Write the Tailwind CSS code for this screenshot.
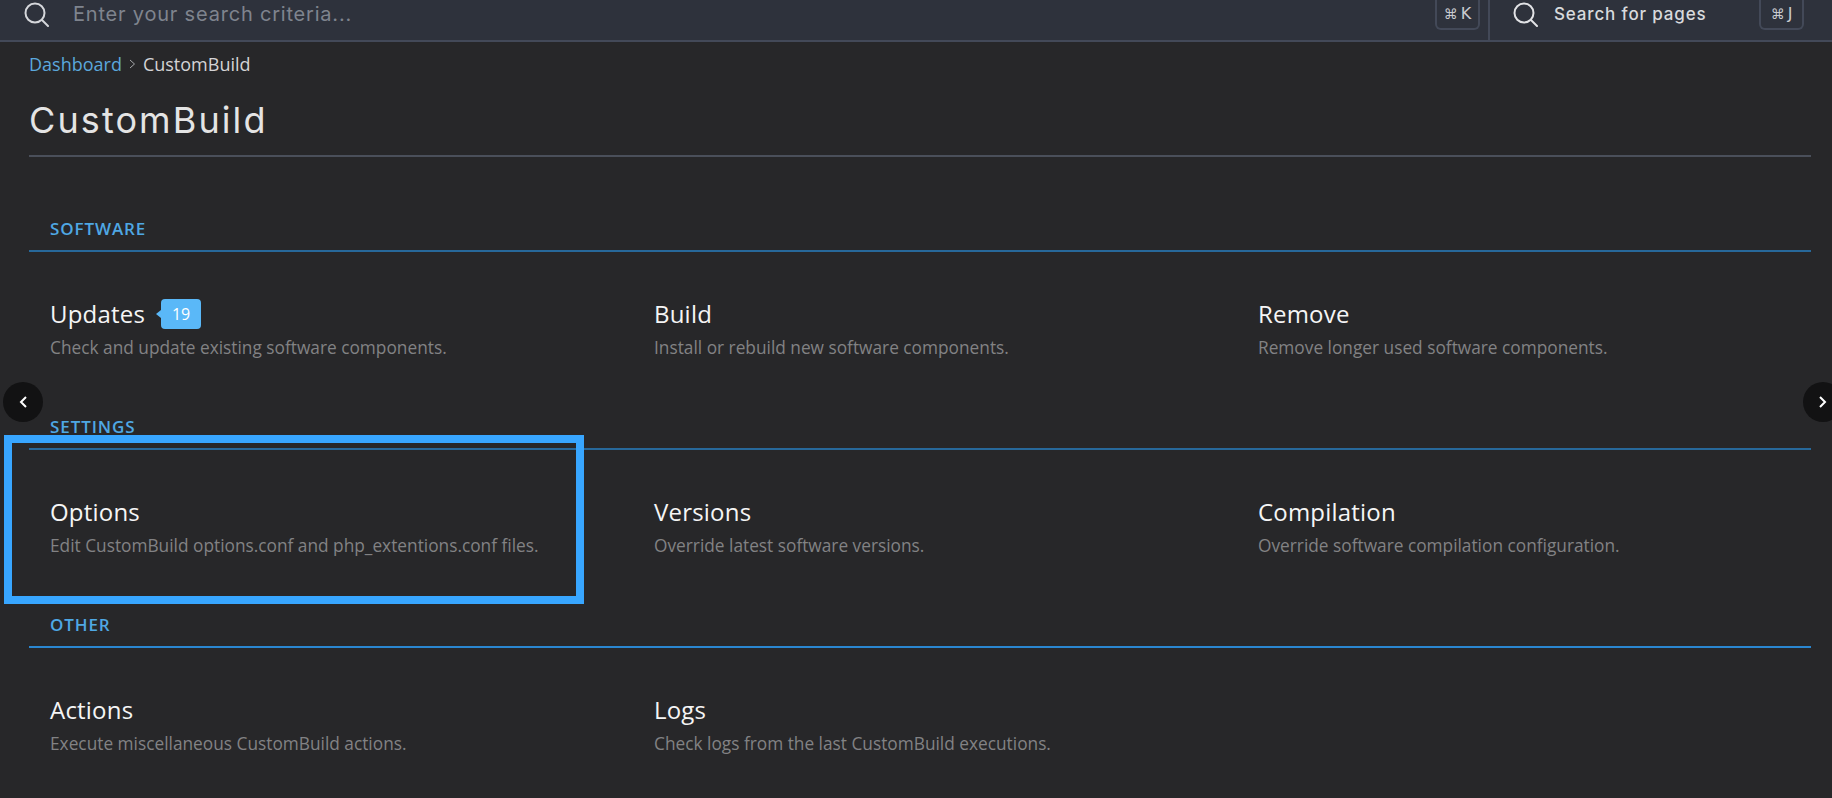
<!DOCTYPE html>
<html lang="en">
<head>
    <meta charset="UTF-8">
    <title>CustomBuild</title>
    <script src="https://cdn.jsdelivr.net/npm/@tailwindcss/browser@4"></script>
</head>
<body class="relative w-[1832px] h-[798px] overflow-hidden bg-[#272729] font-['Open_Sans',sans-serif] text-white">

    <!-- Top search bar -->
    <header class="flex h-[42px] border-b-2 border-[#434958] bg-[#2e323c]">
        <div class="flex flex-1 items-start pl-[24px] pr-[8px]">
            <svg class="mt-[2px] w-[25px] h-[25px] text-[#d5d7db]" viewBox="0 0 25 25" fill="none" stroke="currentColor" stroke-width="2" stroke-linecap="round"><circle cx="11" cy="11" r="9.5"/><path d="M18 18l6 6"/></svg>
            <span class="ml-[24px] mt-[1px] font-['Inter',sans-serif] text-[20px] leading-[26px] tracking-[0.8px] text-[#7f848e]">Enter your search criteria...</span>
            <kbd class="ml-auto flex items-center justify-center gap-[3px] w-[45px] h-[30px] rounded-b-md border-x-2 border-b-2 border-[#434958] font-['DejaVu_Sans',sans-serif] text-[14px] text-[#c9cbd0]">⌘<span class="text-[16px]">K</span></kbd>
        </div>
        <div class="flex w-[344px] items-start border-l-2 border-[#434958] pl-[23px]">
            <svg class="mt-[2px] w-[25px] h-[25px] text-[#e2e3e6]" viewBox="0 0 25 25" fill="none" stroke="currentColor" stroke-width="2" stroke-linecap="round"><circle cx="11" cy="11" r="9.5"/><path d="M18 18l6 6"/></svg>
            <span class="ml-[16px] mt-[1px] font-['Inter',sans-serif] text-[17px] leading-[26px] tracking-[0.85px] font-medium text-[#d8dadd]">Search for pages</span>
            <kbd class="ml-auto mr-[28px] flex items-center justify-center gap-[3px] w-[45px] h-[30px] rounded-b-md border-x-2 border-b-2 border-[#434958] font-['DejaVu_Sans',sans-serif] text-[14px] text-[#c9cbd0]">⌘<span class="text-[16px]">J</span></kbd>
        </div>
    </header>

    <main class="pl-[29px] pr-[21px]">
        <!-- Breadcrumb -->
        <nav class="flex h-[44px] items-center text-[18px]">
            <a class="text-[#5ba8dc]">Dashboard</a>
            <svg class="mx-[7px] w-[7px] h-[10px] text-[#a5a7aa]" viewBox="0 0 7 10" fill="none" stroke="currentColor" stroke-width="1"><path d="M1 1l4.5 4L1 9"/></svg>
            <span class="text-[#d4d4d6]">CustomBuild</span>
        </nav>

        <h1 class="h-[71px] pt-[14px] border-b-2 border-[#4a4f5a] font-['Inter',sans-serif] text-[36px] leading-[40px] tracking-[2.1px] text-[#e4e4e4]">CustomBuild</h1>

        <!-- Software -->
        <section class="mt-[61px] h-[198px]">
            <h2 class="h-[34px] pb-[10px] border-b-2 border-[#27689a] pl-[21px] text-[17px] leading-[22px] font-semibold tracking-[0.9px] text-[#4fa8e4]">SOFTWARE</h2>
            <div class="grid grid-cols-[604px_604px_1fr] pl-[21px] pt-[47px]">
                <div>
                    <div class="flex items-center h-[30px]">
                        <h3 class="text-[24px] leading-[30px] tracking-[0.2px] text-[#f5f5f5]">Updates</h3>
                        <span class="relative ml-[16px] flex items-center justify-center w-[40px] h-[30px] rounded-[4px] bg-[#5ab8f8] text-[16px] text-white">
                            <i class="absolute left-[-5px] top-[11px] border-y-[4px] border-r-[5px] border-y-transparent border-r-[#5ab8f8]"></i>19
                        </span>
                    </div>
                    <p class="mt-[7px] text-[17.3px] leading-[24px] text-[#828284]">Check and update existing software components.</p>
                </div>
                <div>
                    <h3 class="text-[24px] leading-[30px] tracking-[0.2px] text-[#f5f5f5]">Build</h3>
                    <p class="mt-[7px] text-[17.3px] leading-[24px] text-[#828284]">Install or rebuild new software components.</p>
                </div>
                <div>
                    <h3 class="text-[24px] leading-[30px] tracking-[0.2px] text-[#f5f5f5]">Remove</h3>
                    <p class="mt-[7px] text-[17.3px] leading-[24px] text-[#828284]">Remove longer used software components.</p>
                </div>
            </div>
        </section>

        <!-- Settings -->
        <section class="h-[198px]">
            <h2 class="h-[34px] pb-[10px] border-b-2 border-[#27689a] pl-[21px] text-[17px] leading-[22px] font-semibold tracking-[0.9px] text-[#4fa8e4]">SETTINGS</h2>
            <div class="grid grid-cols-[604px_604px_1fr] pl-[21px] pt-[47px]">
                <div>
                    <h3 class="text-[24px] leading-[30px] tracking-[0.2px] text-[#f5f5f5]">Options</h3>
                    <p class="mt-[7px] text-[17.3px] leading-[24px] text-[#828284]">Edit CustomBuild options.conf and php_extentions.conf files.</p>
                </div>
                <div>
                    <h3 class="text-[24px] leading-[30px] tracking-[0.2px] text-[#f5f5f5]">Versions</h3>
                    <p class="mt-[7px] text-[17.3px] leading-[24px] text-[#828284]">Override latest software versions.</p>
                </div>
                <div>
                    <h3 class="text-[24px] leading-[30px] tracking-[0.2px] text-[#f5f5f5]">Compilation</h3>
                    <p class="mt-[7px] text-[17.3px] leading-[24px] text-[#828284]">Override software compilation configuration.</p>
                </div>
            </div>
        </section>

        <!-- Other -->
        <section class="h-[198px]">
            <h2 class="h-[34px] pb-[10px] border-b-2 border-[#2a86d0] pl-[21px] text-[17px] leading-[22px] font-semibold tracking-[0.9px] text-[#4fa8e4]">OTHER</h2>
            <div class="grid grid-cols-[604px_604px_1fr] pl-[21px] pt-[47px]">
                <div>
                    <h3 class="text-[24px] leading-[30px] tracking-[0.2px] text-[#f5f5f5]">Actions</h3>
                    <p class="mt-[7px] text-[17.3px] leading-[24px] text-[#828284]">Execute miscellaneous CustomBuild actions.</p>
                </div>
                <div>
                    <h3 class="text-[24px] leading-[30px] tracking-[0.2px] text-[#f5f5f5]">Logs</h3>
                    <p class="mt-[7px] text-[17.3px] leading-[24px] text-[#828284]">Check logs from the last CustomBuild executions.</p>
                </div>
            </div>
        </section>
    </main>

    <!-- Carousel arrows -->
    <button class="absolute left-[3px] top-[382px] flex items-center justify-center w-[40px] h-[40px] rounded-full bg-[#121213]">
        <svg class="w-[9px] h-[12px]" viewBox="0 0 9 12" fill="none" stroke="white" stroke-width="2"><path d="M7 1L2 6l5 5"/></svg>
    </button>
    <button class="absolute left-[1803px] top-[382px] flex items-center justify-center w-[40px] h-[40px] rounded-full bg-[#121213]">
        <svg class="w-[9px] h-[12px] -translate-x-[1px]" viewBox="0 0 9 12" fill="none" stroke="white" stroke-width="2"><path d="M2 1l5 5-5 5"/></svg>
    </button>

    <!-- Highlight box drawn over the screenshot -->
    <div class="absolute left-[4px] top-[435px] w-[580px] h-[169px] border-[8px] border-[#38a6ff]"></div>
</body>
</html>
